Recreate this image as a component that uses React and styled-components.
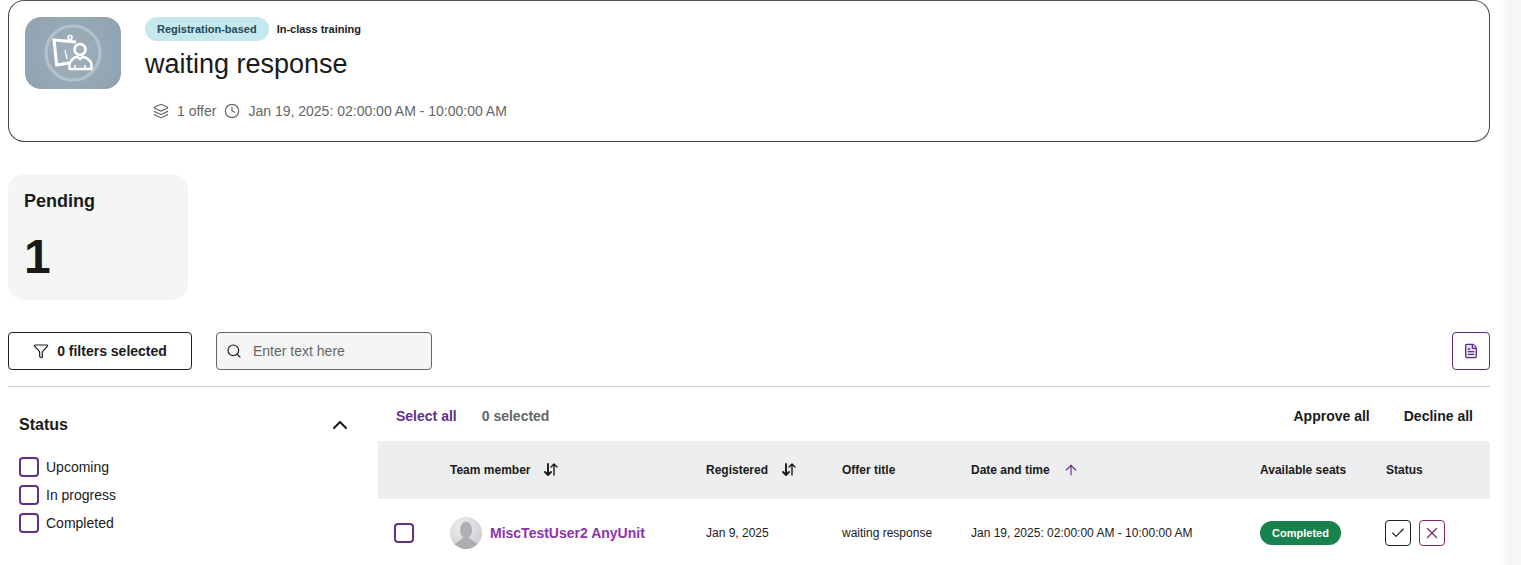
import styled, { createGlobalStyle } from 'styled-components';
import { ArrowUp, Check, ChevronUp, Clock, FileText, Filter, Layers, Search, X } from 'lucide-react';

const GlobalStyle = createGlobalStyle`
  html, body {
    margin: 0;
    height: 565px;
    overflow: hidden;
    background: #fff;
    font-family: "Liberation Sans", Arial, sans-serif;
    color: #1a1a1a;
  }
  * {
    box-sizing: border-box;
  }
`;

const COLUMNS = '72px 256px 136px 129px 289px 126px 104px';

const Page = styled.div`
  display: flex;
  height: 565px;
  overflow: hidden;
`;

const Main = styled.main`
  flex: 1;
  padding: 0 11px 0 8px;
`;

const ScrollTrack = styled.div`
  width: 20px;
  background: linear-gradient(90deg, #fff 0%, #f4f4f4 45%, #f7f7f7 100%);
`;

const CourseCard = styled.section`
  display: flex;
  gap: 24px;
  height: 142px;
  padding: 16px;
  border: 1px solid #444;
  border-top-color: #555;
  border-radius: 16px;
`;

const Thumb = styled.div`
  display: flex;
  align-items: center;
  justify-content: center;
  width: 96px;
  height: 72px;
  border-radius: 16px;
  background: radial-gradient(circle, #a0b0bc 0%, #8ea1af 100%);
`;

const CourseBody = styled.div`
  display: flex;
  flex-direction: column;
`;

const Badges = styled.div`
  display: flex;
  align-items: center;
  gap: 8px;
  height: 24px;
`;

const TypeBadge = styled.span`
  display: flex;
  align-items: center;
  height: 24px;
  padding: 0 12px;
  border-radius: 12px;
  background: #c5e8ef;
  color: #1c4a57;
  font-size: 11px;
  font-weight: 700;
`;

const PlainBadge = styled.span`
  font-size: 11px;
  font-weight: 700;
`;

const CourseTitle = styled.h1`
  margin: 6px 0 0;
  font-size: 27px;
  font-weight: 400;
  line-height: 34px;
`;

const Meta = styled.div`
  display: flex;
  align-items: center;
  gap: 8px;
  margin: 21px 0 0 8px;
  color: #666;
  font-size: 14px;
  line-height: 18px;

  svg {
    flex: none;
  }
`;

const StatCard = styled.section`
  width: 180px;
  height: 126px;
  margin-top: 32px;
  padding: 16px;
  border-radius: 16px;
  background: #f5f5f5;
`;

const StatLabel = styled.div`
  font-size: 18px;
  font-weight: 700;
  line-height: 22px;
`;

const StatValue = styled.div`
  margin-top: 17px;
  font-size: 48px;
  font-weight: 700;
  line-height: 56px;
`;

const Toolbar = styled.div`
  display: flex;
  align-items: center;
  gap: 24px;
  height: 55px;
  margin-top: 32px;
  padding-bottom: 17px;
  border-bottom: 1px solid #d0d0d0;
`;

const FilterButton = styled.button`
  display: flex;
  align-items: center;
  justify-content: center;
  gap: 8px;
  width: 184px;
  height: 38px;
  padding: 0;
  border: 1px solid #222;
  border-radius: 4px;
  background: #fff;
  color: #1a1a1a;
  font: 700 14px "Liberation Sans", Arial, sans-serif;
`;

const SearchBox = styled.label`
  display: flex;
  align-items: center;
  gap: 11px;
  width: 216px;
  height: 38px;
  padding: 0 9px;
  border: 1px solid #666;
  border-radius: 4px;
  background: #f5f5f5;
`;

const SearchInput = styled.input`
  flex: 1;
  min-width: 0;
  padding: 0;
  border: 0;
  outline: 0;
  background: transparent;
  color: #1a1a1a;
  font: 14px "Liberation Sans", Arial, sans-serif;

  &::placeholder {
    color: #666;
    opacity: 1;
  }
`;

const ExportButton = styled.button`
  display: flex;
  align-items: center;
  justify-content: center;
  width: 38px;
  height: 38px;
  margin-left: auto;
  padding: 0;
  border: 1px solid #5f2c84;
  border-radius: 4px;
  background: #fff;
  color: #5f2c84;
`;

const Content = styled.div`
  display: flex;
`;

const Sidebar = styled.aside`
  width: 370px;
  padding: 27px 26px 0 11px;
`;

const SidebarHeader = styled.div`
  display: flex;
  align-items: center;
  justify-content: space-between;
  height: 22px;
  margin-bottom: 21px;
`;

const SidebarTitle = styled.h2`
  margin: 0;
  font-size: 16px;
  font-weight: 700;
`;

const CheckRow = styled.div`
  display: flex;
  align-items: center;
  gap: 7px;
  height: 20px;
  margin-bottom: 8px;
  font-size: 14px;
`;

const Box = styled.span`
  display: block;
  flex: none;
  width: 20px;
  height: 20px;
  border: 2px solid #642f8c;
  border-radius: 4px;
`;

const Results = styled.div`
  flex: 1;
`;

const ActionBar = styled.div`
  display: flex;
  align-items: center;
  height: 54px;
  padding: 3px 17px 0 18px;
  font-size: 14px;
  font-weight: 700;
`;

const SelectAll = styled.span`
  color: #642f8c;
`;

const SelectedCount = styled.span`
  margin-left: 25px;
  color: #666;
`;

const BulkAction = styled.span`
  margin-left: ${(props) => (props.$first ? 'auto' : '34px')};
`;

const HeaderRow = styled.div`
  display: grid;
  grid-template-columns: ${COLUMNS};
  align-items: center;
  height: 58px;
  border-radius: 0 4px 4px 0;
  background: #edeef0;
  font-size: 12px;
  font-weight: 700;
`;

const HeaderCell = styled.div`
  display: flex;
  align-items: center;
  gap: 13px;
`;

const DataRow = styled.div`
  display: grid;
  grid-template-columns: ${COLUMNS};
  align-items: center;
  height: 68px;
  font-size: 12px;
`;

const RowCheck = styled.div`
  padding-left: 16px;
`;

const Member = styled.div`
  display: flex;
  align-items: center;
  gap: 8px;
  color: #8d32ad;
  font-size: 14px;
  font-weight: 700;
`;

const StatusPill = styled.span`
  display: inline-flex;
  align-items: center;
  justify-content: center;
  width: 81px;
  height: 24px;
  border-radius: 12px;
  background: #18824c;
  color: #fff;
  font-size: 11px;
  font-weight: 700;
`;

const RowActions = styled.div`
  display: flex;
  gap: 8px;
  margin-left: -1px;
`;

const IconButton = styled.button`
  display: flex;
  align-items: center;
  justify-content: center;
  width: 26px;
  height: 26px;
  padding: 0;
  border: 1px solid ${(props) => props.$color};
  border-radius: 4px;
  background: #fff;
  color: ${(props) => props.$color};
`;

//-------------------------------------------------------------------------------------------------

function TrainingIcon() {
  return (
    <svg width="60" height="60" viewBox="0 0 60 60" fill="none" stroke="#fff">
      <circle cx="30" cy="30" r="27" stroke="#b3c1cb" strokeWidth="3.2" />
      <circle cx="27" cy="14.5" r="2" strokeWidth="1.6" />
      <path d="M33 19 L11 17 L13.7 42 L26 40" strokeWidth="3" />
      <path d="M22 27 L24 36" strokeWidth="1.2" />
      <circle cx="37" cy="26.5" r="5.4" strokeWidth="2.8" />
      <path
        d="M26.5 46 V42 C26.5 37.5 31 34.5 34 33.8 L37 36 L40 33.8 C43 34.5 48.5 37.5 48.5 42 V46 Z"
        strokeWidth="2.6"
        strokeLinejoin="round"
      />
      <path d="M32 46 V42 M42 46 V42" strokeWidth="1.6" />
    </svg>
  );
}

function Avatar() {
  return (
    <svg width="32" height="32" viewBox="0 0 32 32">
      <defs>
        <radialGradient id="avatar-bg" cx="0.4" cy="0.3" r="0.8">
          <stop offset="0" stopColor="#f0f0f2" />
          <stop offset="1" stopColor="#c9c9cd" />
        </radialGradient>
        <clipPath id="avatar-clip">
          <circle cx="16" cy="16" r="16" />
        </clipPath>
      </defs>
      <g clipPath="url(#avatar-clip)">
        <rect width="32" height="32" fill="url(#avatar-bg)" />
        <ellipse cx="16" cy="13" rx="6" ry="8.5" fill="#b0b0b4" />
        <path d="M2 32 C3 26 9 25 12.5 21 L19.5 21 C23 25 29 26 30 32 Z" fill="#acacb0" />
      </g>
    </svg>
  );
}

function SortIcon() {
  return (
    <svg width="16" height="16" viewBox="0 0 16 16" fill="none" stroke="#1a1a1a" strokeLinecap="round" strokeLinejoin="round">
      <path d="M5 2 V13 M2 10 L5 13 L8 10" strokeWidth="1.9" />
      <path d="M11 13 V2 M8 5 L11 2 L14 5" strokeWidth="1.4" />
    </svg>
  );
}

function App() {
  return (
    <Page>
      <GlobalStyle />
      <Main>
        <CourseCard>
          <Thumb>
            <TrainingIcon />
          </Thumb>
          <CourseBody>
            <Badges>
              <TypeBadge>Registration-based</TypeBadge>
              <PlainBadge>In-class training</PlainBadge>
            </Badges>
            <CourseTitle>waiting response</CourseTitle>
            <Meta>
              <Layers size={16} strokeWidth={1.75} />
              <span>1 offer</span>
              <Clock size={16} strokeWidth={1.75} />
              <span>Jan 19, 2025: 02:00:00 AM - 10:00:00 AM</span>
            </Meta>
          </CourseBody>
        </CourseCard>

        <StatCard>
          <StatLabel>Pending</StatLabel>
          <StatValue>1</StatValue>
        </StatCard>

        <Toolbar>
          <FilterButton>
            <Filter size={16} strokeWidth={1.75} />
            0 filters selected
          </FilterButton>
          <SearchBox>
            <Search size={16} strokeWidth={1.75} />
            <SearchInput placeholder="Enter text here" />
          </SearchBox>
          <ExportButton>
            <FileText size={16} strokeWidth={2} fill="#e9dff0" />
          </ExportButton>
        </Toolbar>

        <Content>
          <Sidebar>
            <SidebarHeader>
              <SidebarTitle>Status</SidebarTitle>
              <ChevronUp size={24} strokeWidth={2} />
            </SidebarHeader>
            {['Upcoming', 'In progress', 'Completed'].map((label) => (
              <CheckRow key={label}>
                <Box />
                {label}
              </CheckRow>
            ))}
          </Sidebar>

          <Results>
            <ActionBar>
              <SelectAll>Select all</SelectAll>
              <SelectedCount>0 selected</SelectedCount>
              <BulkAction $first>Approve all</BulkAction>
              <BulkAction>Decline all</BulkAction>
            </ActionBar>

            <HeaderRow>
              <div />
              <HeaderCell>
                Team member
                <SortIcon />
              </HeaderCell>
              <HeaderCell>
                Registered
                <SortIcon />
              </HeaderCell>
              <HeaderCell>Offer title</HeaderCell>
              <HeaderCell>
                Date and time
                <ArrowUp size={16} strokeWidth={1.75} color="#642f8c" />
              </HeaderCell>
              <HeaderCell>Available seats</HeaderCell>
              <HeaderCell>Status</HeaderCell>
            </HeaderRow>

            <DataRow>
              <RowCheck>
                <Box />
              </RowCheck>
              <Member>
                <Avatar />
                MiscTestUser2 AnyUnit
              </Member>
              <div>Jan 9, 2025</div>
              <div>waiting response</div>
              <div>Jan 19, 2025: 02:00:00 AM - 10:00:00 AM</div>
              <div>
                <StatusPill>Completed</StatusPill>
              </div>
              <RowActions>
                <IconButton $color="#222">
                  <Check size={16} strokeWidth={1.75} />
                </IconButton>
                <IconButton $color="#7a2a63">
                  <X size={18} strokeWidth={1.75} />
                </IconButton>
              </RowActions>
            </DataRow>
          </Results>
        </Content>
      </Main>
      <ScrollTrack />
    </Page>
  );
}

export default App;
